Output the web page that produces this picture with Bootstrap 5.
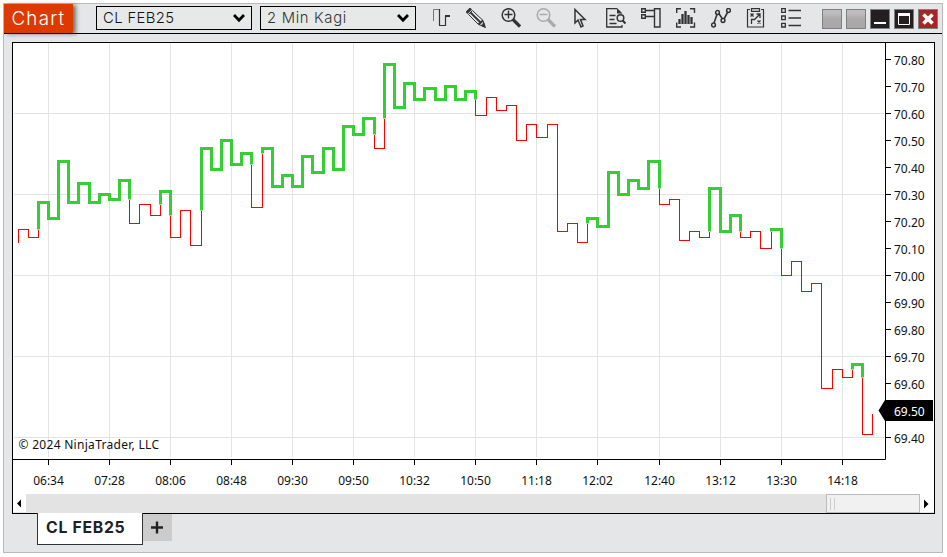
<!DOCTYPE html>
<html lang="en">
<head>
<meta charset="utf-8">
<title>Chart - CL FEB25</title>
<link href="https://cdn.jsdelivr.net/npm/bootstrap@5.3.0/dist/css/bootstrap.min.css" rel="stylesheet">
<style>
body{background:#fff;font-family:Inter,"Open Sans",sans-serif;overflow:hidden}
.win{width:940px;height:550px;margin:3px 0 0 3px;background:#e5e6e8;border:1px solid #bababa}
.bar{height:30px;border-bottom:1px solid #000}
.brand-tag{width:69px;height:29px;margin-right:23px;background:#dc3a00;color:#fff;font-size:18.8px;font-weight:300;letter-spacing:1.2px;line-height:30px;padding-left:7.5px;box-shadow:3px 1px 4px rgba(0,0,0,.5)}
.picker{width:156px;height:24px;margin-top:2px;margin-right:8px;border:1px solid #000;background:#e7e9e8;padding:0 6px 0 6px;font-size:14.8px;font-weight:300;color:#111;line-height:22px}
.picker svg{margin-bottom:1px}
.picker span{letter-spacing:.4px}
.picker .series{letter-spacing:.7px;color:#333}
.tools{gap:15px;margin:4px 21px 0 7px}
.tools svg{width:20px;height:20px;fill:none;stroke:#333}
.wbtns{gap:4px;margin-top:5px}
.wbtn{width:20px;height:20px;border:1px solid #808080}
.blank{background:linear-gradient(#bebcbc 0 20%,#aaa8a8 50%)}
.dark-b{background:#231f20}
.red-b{background:#a92327}
.panel{width:923px;height:472px;margin:8px 0 0 8px;background:#fff;border:1px solid #000}
.plot{width:921px;height:451px}
.plot text{font:12px "Noto Sans","Open Sans",sans-serif;fill:#111}
.scroller{height:19px;background:#e3e3e3}
.arrow{width:13px;height:18px;background:#fff}
.arrow-end{width:14px}
.thumb{width:94px;height:19px;border:1px solid #bbb;background:#f1f1f1;padding:3px 0 0 3px;gap:3px}
.thumb i{width:1px;height:12px;background:#ccc}
.sheet{width:106px;height:32px;margin:-1px 0 0 33px;background:#fff;border:1px solid #333;border-top:0;font-weight:700;font-size:15.8px;color:#222;line-height:30px;padding-left:8px;position:relative;letter-spacing:.7px}
.plus{width:29px;height:27px;background:#ccc}
</style>
<script src="https://cdn.jsdelivr.net/npm/bootstrap@5.3.0/dist/js/bootstrap.bundle.min.js"></script>
</head>
<body>
<div class="win">
  <div class="bar d-flex align-items-start">
    <div class="brand-tag">Chart</div>
    <div class="picker d-flex justify-content-between align-items-center"><span>CL FEB25</span><svg width="12" height="10" fill="none" stroke="#000" stroke-width="2.8"><path d="M1 2l5 5.2L11 2"/></svg></div>
    <div class="picker d-flex justify-content-between align-items-center"><span class="series">2 Min Kagi</span><svg width="12" height="10" fill="none" stroke="#000" stroke-width="2.8"><path d="M1 2l5 5.2L11 2"/></svg></div>
    <div class="tools d-flex">
      <svg><path d="M2.5 13V1.5H8.500" stroke="#777"/><path d="M8.500 1V17.500H14.500V8" stroke-width="1.200"/><path d="M14 8h5" stroke-width="2"/></svg>
      <svg><path d="M.5 5L5 .5" stroke-width="3"/><path d="M2.500 6.500L6.500 2.500L17 12.500L18.500 18.500L12.500 16.500z"/><path d="M4.500 4.500L15 15" stroke-width="1.800"/><path d="M12.500 16.500L17 12.500M15.500 17L18.500 18.500L17.500 15" stroke-width="2"/></svg>
      <svg><circle cx="7.500" cy="7" r="6.300" stroke-width="1.500"/><path d="M3.500 6.500h8M7.500 2.500v8" stroke-width="1.400"/><path d="M12 11.500L19 18.500" stroke-width="3.200"/></svg>
      <svg style="stroke:#aaa"><circle cx="7.500" cy="7" r="6.300" stroke-width="1.500"/><path d="M3.500 6.500h8" stroke-width="1.400"/><path d="M12 11.500L19 18.500" stroke-width="3.200"/></svg>
      <svg><path d="M4 1.500V15L7 12L10 19L12 18L9.500 11.500H14z" stroke-width="1.500"/></svg>
      <svg><path d="M16 17v2H.7V.7H11" stroke-width="1.300"/><path d="M11 0v5.500h5.500z" fill="#333" stroke="none"/><path d="M3.500 7.500h6M3.500 11.500h5M3.500 15.500h7" stroke-width="1.500"/><circle cx="14.500" cy="10" r="3.300" stroke-width="1.500"/><path d="M16.500 12.500l3 3" stroke-width="2"/></svg>
      <svg><path d="M.7.700h3.600v3.600H.7zM.7 6.700h3.600v3.600H.7zM13.500.700h5.500v18.300h-5.500zM4.500 2.500h9M4.500 8.500h9" stroke-width="1.400"/></svg>
      <svg><path d="M.7 5V.7H5M14 .7h4.500V5M.7 14.500v4.500H5M14 19h4.500V14.500" stroke-width="1.400"/><path d="M3.500 11v5M6.500 6v10M9.500 3v13M12.500 7v9M15.500 9v7" stroke-width="2.300"/></svg>
      <svg><path d="M3 15L6.500 5M7.500 5L11.500 11M13 11L17 3.500" stroke-width="1.600"/><g fill="#e5e6e8" stroke-width="1.500"><circle cx="2.500" cy="17" r="1.900"/><circle cx="6.500" cy="4.500" r="1.900"/><circle cx="12" cy="12.500" r="1.900"/><circle cx="17.500" cy="2.500" r="1.900"/></g></svg>
      <svg><path d="M4 1.500H1.500v17.500h16V1.500H15M5.500.700h8v2.600h-8z" stroke-width="1.200"/><path d="M4.500 5.500l3 3M7.500 5.500L4.500 8.500M11.500 12.500l3 3M14.500 12.500L11.500 15.500M5.500 16V11.500H8.500L13.500 6.500M10.500 6h3.500V10" stroke-width="1.300"/></svg>
      <svg><path d="M.7.700h3.600v3.600H.7zM.7 8h3.600v3.600H.7zM.7 15.400h3.600V19H.7z" stroke-width="1.300"/><path d="M7.500 2.500H20M7.500 10H20M7.500 17.500H20" stroke-width="1.700"/></svg>
    </div>
    <div class="wbtns d-flex">
      <div class="wbtn blank"></div><div class="wbtn blank"></div>
      <div class="wbtn dark-b d-flex"><svg width="18" height="18"><path d="M3 13h12" stroke="#fff" stroke-width="2"/></svg></div>
      <div class="wbtn dark-b d-flex"><svg width="18" height="18" fill="none" stroke="#fff"><path d="M3.500 4.500h11v10h-11z"/><path d="M3 4.500h12" stroke-width="3"/></svg></div>
      <div class="wbtn red-b d-flex"><svg width="18" height="18"><path d="M4.500 4.500l9 9M13.500 4.500l-9 9" stroke="#fff" stroke-width="3.600"/></svg></div>
    </div>
  </div>

  <div class="panel d-flex flex-column">
    <svg class="plot" id="plot" viewBox="13 43 921 451"></svg>
    <div class="scroller d-flex">
      <div class="arrow me-auto"><svg class="d-block" width="13" height="18"><path d="M8 5.500v8L4 9.500z"/></svg></div>
      <div class="thumb d-flex"><i></i><i></i></div>
      <div class="arrow arrow-end"><svg class="d-block" width="13" height="18"><path d="M4 5.500v9L8.500 10z"/></svg></div>
    </div>
  </div>
  <div class="d-flex align-items-start">
    <div class="sheet">CL FEB25</div>
    <div class="plus d-flex align-items-center justify-content-center"><svg width="15" height="14" stroke="#222" stroke-width="2.400"><path d="M1 6.500h12M7 .5v12"/></svg></div>
  </div>
</div>
<script>
// Turning levels of the Kagi line, one per column.
const levels=[229,237,202,218,161,202,183,202,194,199,180,223,204,215,191,237,210,245,148,169,140,164,153,207,148,186,175,186,156,172,148,169,126,134,118,148,64,107,83,99,88,99,86,99,91,115,97,110,105,140,124,137,124,231,223,242,218,226,172,194,180,188,161,204,199,240,231,237,188,231,215,237,231,248,229,275,261,291,283,388,369,377,364,434,413];
const wide=new Set([7,13,18,24,30,35,41,46,52,58,63,69,74,80]);
const times=["06:34","07:28","08:06","08:48","09:30","09:50","10:32","10:50","11:18","12:02","12:40","13:12","13:30","14:18"];
const gx=[48,109,170,231,292,353,414,475,536,597,659,720,781,842];
let out='';
for(const x of gx)out+=`<path d="M${x+.5} 43V457" stroke="#e3e3e3"/>`;
for(let y=113;y<440;y+=81)out+=`<path d="M14 ${y+.5}H884" stroke="#e3e3e3"/>`;
out+='<path d="M13 459.500H885.500V43" fill="none" stroke="#000"/>';
gx.forEach((x,i)=>{out+=`<path d="M${x+.5} 460v5" stroke="#000"/><text x="${x+.5}" y="485" text-anchor="middle">${times[i]}</text>`});
for(let i=0;i<15;i++){const y=59+27*i;out+=`<path d="M886 ${y+.5}h5" stroke="#000"/><text x="894" y="${y+6}">${(70.8-i/10).toFixed(2)}</text>`}

// The line turns thick above the previous shoulder and thin below the previous waist.
let thick='',thin='',up=false,x=18.5,prev=242.5;
const add=(a,b,c,d)=>{const s=`M${a} ${b}L${c} ${d}`;if(up)thick+=s;else thin+=s};
levels.forEach((l,i)=>{
  const y=l+.5,ref=i>1?levels[i-2]+.5:null;
  if(ref!==null&&((!up&&y<ref&&y<prev)||(up&&y>ref&&y>prev))){add(x,prev,x,ref);up=!up;add(x,ref,x,y)}
  else add(x,prev,x,y);
  if(i<levels.length-1){const nx=x+(wide.has(i+1)?11:10),e=up?1.5:.5;add(x-e,y,nx+e,y);x=nx}
  prev=y;
});
out+=`<path d="${thin}" stroke="#f00" fill="none" shape-rendering="crispEdges"/><path d="${thick}" stroke="#35cf35" stroke-width="3" fill="none"/>`;
out+='<text x="18.500" y="449" textLength="140.500">© 2024 NinjaTrader, LLC</text>';
out+='<path d="M878.500 410.500L885 400H933V421H885z" fill="#000"/><text x="894" y="416" style="fill:#fff">69.50</text>';
document.getElementById('plot').innerHTML=out;
</script>
</body>
</html>
